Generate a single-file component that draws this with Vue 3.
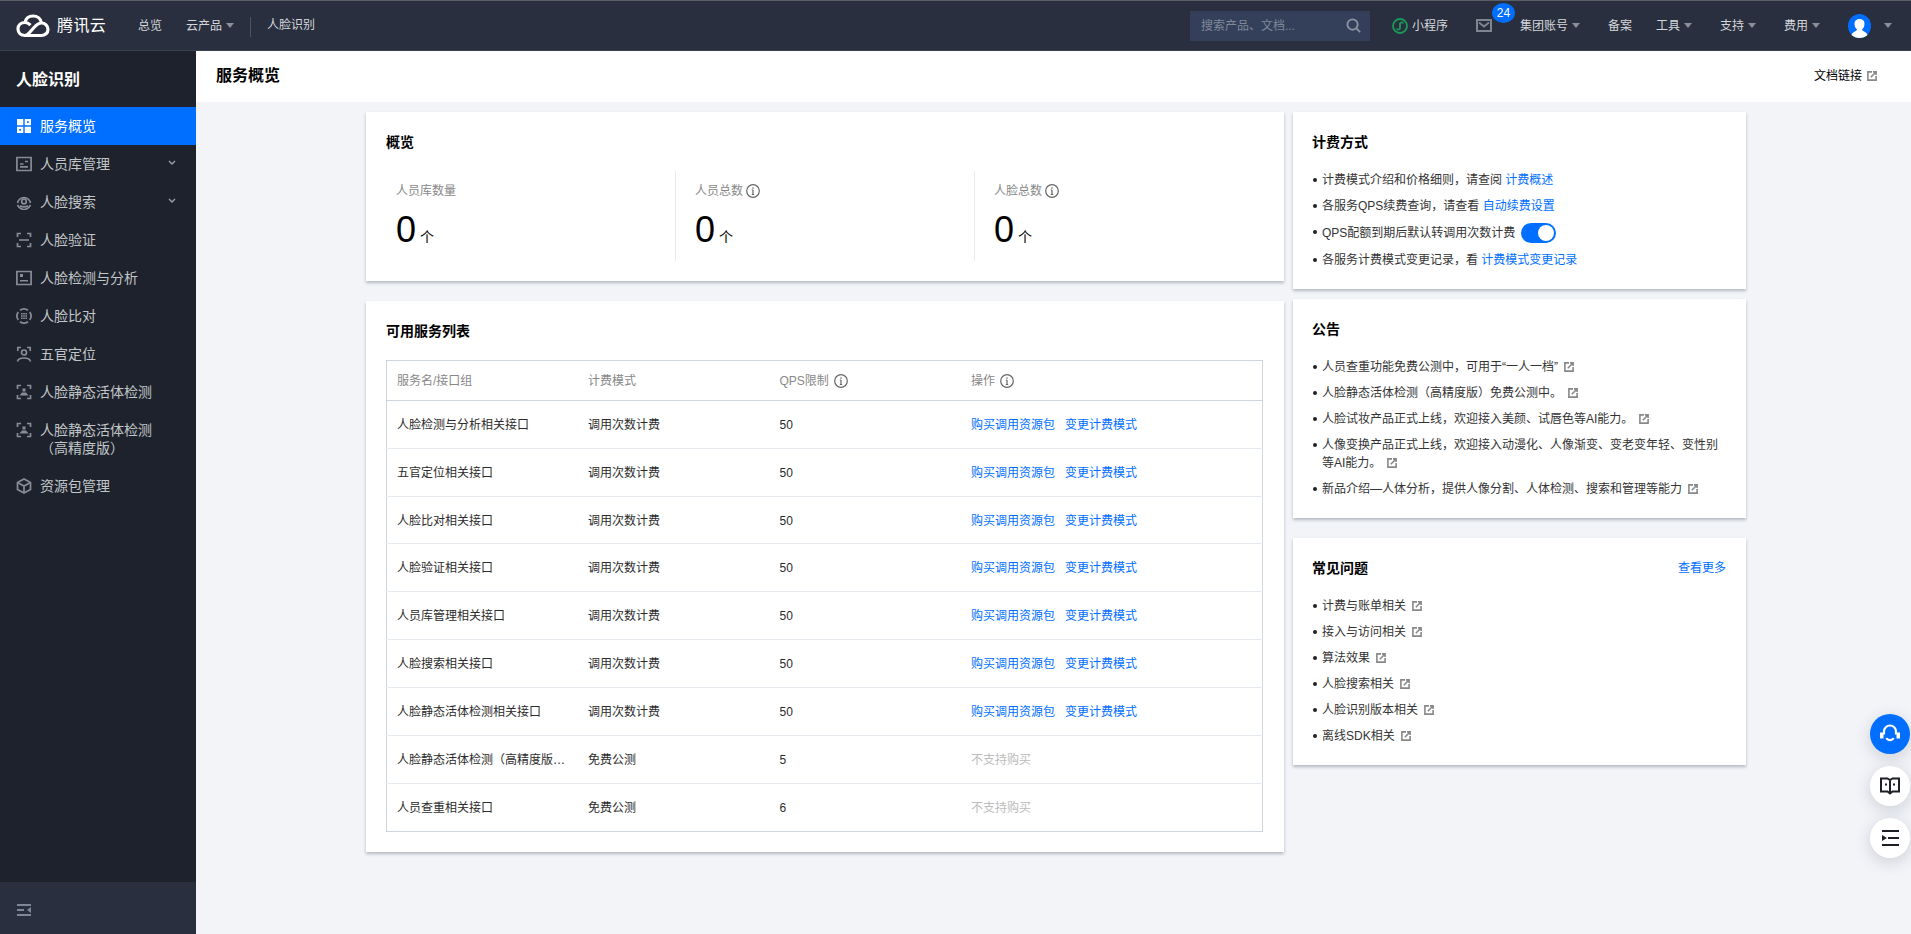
<template>
  <div class="page">
    <header class="topbar">
      <div class="logo">
        <svg width="34" height="24" viewBox="0 0 34 24" fill="none" stroke="#fff" stroke-width="3.2">
          <path d="M9 21.500c-3.800 0-7-2.500-7-6.500s3.200-6.500 7-6.500c.8-4 4-6.500 8-6.500 4.500 0 8 3 8.500 7" />
          <path d="M9 21.500h16.500c3.500 0 6.500-2.500 6.500-6s-3-6.500-6.500-6.500c-3 0-5 1.800-7.500 4.500l-4 4.500c-1.500 1.700-3 3.500-5 3.500" />
          <path d="M9 8.500c2.500 0 4 1.200 5.500 2.700" />
        </svg>
        <span>腾讯云</span>
      </div>
      <nav class="nav-left">
        <a class="nav-link">总览</a>
        <a class="nav-link">云产品<i class="caret"></i></a>
        <span class="nav-sep"></span>
        <a class="nav-link current">人脸识别</a>
      </nav>
      <div class="nav-right">
        <div class="search">
          <span>搜索产品、文档...</span>
          <svg width="15" height="15" viewBox="0 0 16 16" fill="none" stroke="#8a919f" stroke-width="2">
            <circle cx="7" cy="7" r="5.500" />
            <path d="M11 11l4 4" />
          </svg>
        </div>
        <a class="nav-link mini">
          <svg width="16" height="16" viewBox="0 0 16 16" fill="none" stroke="#1a9a58" stroke-width="1.800">
            <circle cx="8" cy="8" r="7" />
            <path d="M5 10.500c0 1.500 2.500 1.500 3 0V5.500c.5-1.500 3-1.500 3 0" />
          </svg>
          小程序
        </a>
        <a class="mail">
          <svg width="16" height="13" viewBox="0 0 16 13" fill="none" stroke="#7f8690" stroke-width="2">
            <rect x="1" y="1" width="14" height="11" />
            <path d="M3 3.500l5 4 5-4" />
          </svg>
          <b class="badge">24</b>
        </a>
        <a class="nav-link account">集团账号<i class="caret"></i></a>
        <a class="nav-link record">备案</a>
        <a v-for="label in ['工具', '支持', '费用']" :key="label" class="nav-link menu">{{ label }}<i class="caret"></i></a>
        <a class="avatar-wrap">
          <svg width="23" height="24" viewBox="0 0 23 24">
            <ellipse cx="11.500" cy="12" rx="11.500" ry="12" fill="#006eff" />
            <path d="M3.500 21c1-3.500 5-3.500 5.500-5.500-1.800-1.500-2.500-3.500-2.500-6C6.500 6.500 8.500 5 11.500 5s5 1.500 5 4.500c0 2.500-.7 4.500-2.500 6 .5 2 4.500 2 5.500 5.500-2 2-5 3-8 3s-6-1-8-3z" fill="#fff" />
          </svg>
          <i class="caret"></i>
        </a>
      </div>
    </header>

    <div class="body">
      <aside class="sidebar">
        <div class="side-title">人脸识别</div>
        <ul class="menu-list">
          <li v-for="item in menu" :key="item.label" class="menu-item" :class="{ active: item.active }">
            <svg class="menu-icon" width="16" height="16" viewBox="0 0 16 16" fill="none" stroke="currentColor" stroke-width="1.700">
              <path v-for="d in item.stroke" :key="d" :d="d" />
              <path v-for="d in item.fill" :key="d" :d="d" fill="currentColor" stroke="none" />
            </svg>
            <span class="menu-text">{{ item.label }}</span>
            <svg v-if="item.arrow" class="menu-arrow" width="8" height="6" viewBox="0 0 8 6" fill="none" stroke="#9aa0a8" stroke-width="1.400">
              <path d="M1 1l3 3 3-3" />
            </svg>
          </li>
        </ul>
        <div class="side-foot">
          <svg width="14" height="12" viewBox="0 0 14 12" fill="#7d8a96">
            <path d="M0 0h14v2H0zM0 5h7v2H0zM0 10h14v2H0zM14 3v6l-4-3z" />
          </svg>
        </div>
      </aside>

      <main class="main">
        <div class="page-head">
          <h1>服务概览</h1>
          <a class="doc-link">文档链接<svg class="ext" viewBox="0 0 10 10" fill="none" stroke="#888" stroke-width="1.600"><path :d="extPath" /></svg></a>
        </div>

        <div class="content">
          <div class="col-left">
            <section class="card">
              <h2>概览</h2>
              <div class="stats">
                <div v-for="s in stats" :key="s.label" class="stat">
                  <div class="stat-label">
                    {{ s.label }}
                    <svg v-if="s.tip" class="info" viewBox="0 0 14 14" fill="none" stroke="#666" stroke-width="1.200"><circle cx="7" cy="7" r="6.300" /><path d="M7 6v4.500M5.800 6H7M5.800 10.500h2.400M7 3.300v1.500" /></svg>
                  </div>
                  <div class="stat-value">0<span>个</span></div>
                </div>
              </div>
            </section>

            <section class="card">
              <h2>可用服务列表</h2>
              <table class="service-table">
                <colgroup>
                  <col class="c1" /><col class="c1" /><col class="c1" /><col />
                </colgroup>
                <thead>
                  <tr>
                    <th>服务名/接口组</th>
                    <th>计费模式</th>
                    <th>QPS限制<svg class="info" viewBox="0 0 14 14" fill="none" stroke="#666" stroke-width="1.200"><circle cx="7" cy="7" r="6.300" /><path d="M7 6v4.500M5.800 6H7M5.800 10.500h2.400M7 3.300v1.500" /></svg></th>
                    <th>操作<svg class="info" viewBox="0 0 14 14" fill="none" stroke="#666" stroke-width="1.200"><circle cx="7" cy="7" r="6.300" /><path d="M7 6v4.500M5.800 6H7M5.800 10.500h2.400M7 3.300v1.500" /></svg></th>
                  </tr>
                </thead>
                <tbody>
                  <tr v-for="row in services" :key="row.name">
                    <td class="ellipsis">{{ row.name }}</td>
                    <td>{{ row.mode }}</td>
                    <td>{{ row.qps }}</td>
                    <td v-if="row.buy">
                      <a class="link">购买调用资源包</a><a class="link second">变更计费模式</a>
                    </td>
                    <td v-else class="muted">不支持购买</td>
                  </tr>
                </tbody>
              </table>
            </section>
          </div>

          <div class="col-right">
            <section class="card">
              <h2>计费方式</h2>
              <ul class="bullets">
                <li>计费模式介绍和价格细则，请查阅 <a class="link">计费概述</a></li>
                <li>各服务QPS续费查询，请查看 <a class="link">自动续费设置</a></li>
                <li class="switch-row">QPS配额到期后默认转调用次数计费<span class="switch"></span></li>
                <li>各服务计费模式变更记录，看 <a class="link">计费模式变更记录</a></li>
              </ul>
            </section>

            <section class="card">
              <h2>公告</h2>
              <ul class="bullets">
                <li v-for="text in notices" :key="text">{{ text }}<svg class="ext" viewBox="0 0 10 10" fill="none" stroke="#888" stroke-width="1.600"><path :d="extPath" /></svg></li>
              </ul>
            </section>

            <section class="card faq">
              <div class="card-head">
                <h2>常见问题</h2>
                <a class="link">查看更多</a>
              </div>
              <ul class="bullets">
                <li v-for="text in faqs" :key="text">{{ text }}<svg class="ext" viewBox="0 0 10 10" fill="none" stroke="#888" stroke-width="1.600"><path :d="extPath" /></svg></li>
              </ul>
            </section>
          </div>
        </div>
      </main>
    </div>

    <div class="float-tools">
      <button class="tool blue">
        <svg width="22" height="22" viewBox="0 0 22 22" fill="none" stroke="#fff" stroke-width="2.200">
          <path d="M5 11.500V8.500a6 6 0 0112 0v3" />
          <path d="M7.500 15c1 2.800 6 2.800 7 0" />
          <path d="M1 9.500h3.500v6H1zM17.500 9.500H21v6h-3.500z" fill="#fff" stroke="none" />
        </svg>
      </button>
      <button class="tool">
        <svg width="20" height="18" viewBox="0 0 20 18" fill="none" stroke="#1c1f26" stroke-width="2">
          <path d="M1 1.500h6.500L10 3l2.500-1.500H19v13h-6.500L10 16.500 7.500 14.500H1zM10 3v13" />
          <path d="M5 6.500h2v2H5zM13 6.500h2v2h-2z" fill="#1c1f26" stroke="none" />
        </svg>
      </button>
      <button class="tool">
        <svg width="17" height="16" viewBox="0 0 17 16" fill="#1c1f26">
          <path d="M0 0h17v2H0zM6 7h11v2H6zM0 14h17v2H0zM0 5l5 3-5 3z" />
        </svg>
      </button>
    </div>
  </div>
</template>

<script setup>
const extPath = 'M5 .9H.9v8.200h8.200V5M3.800 6.200L9 1M6 .9h3.100V4'

const corners = 'M1.500 5V1.500H5M11 1.500h3.500V5M14.500 11v3.500H11M5 14.500H1.500V11'
const liveBody = 'M6.500 4.500h3v3h-3zM3.500 11.500L6 8.500h4l2.500 3z'

const menu = [
  {
    label: '服务概览',
    active: true,
    fill: ['M1 1h6.300v6.300H1zM8.700 15V8.700H15V15zM8.700 1H15v6.300H8.700zm2.300 2.300V5h1.700V3.300zM1 8.700h6.300V15H1zM3.300 11v1.700H5V11z']
  },
  {
    label: '人员库管理',
    arrow: true,
    stroke: ['M.9 1.500h14.200v13H.9z', 'M9 5.500h3M4 8h3.500M4 10.800h8']
  },
  {
    label: '人脸搜索',
    arrow: true,
    stroke: [
      'M1.500 9A6.600 6.600 0 0114.500 9',
      'M1.500 11c1.500 3 4 4.500 6.500 4.500s5-1.500 6.500-4.500',
      'M4 11.700c2 1.500 6 1.500 8 0',
      'M8 5.200a2.300 2.300 0 110 4.600 2.300 2.300 0 010-4.600z'
    ]
  },
  {
    label: '人脸验证',
    stroke: [corners],
    fill: ['M3 7.200h10v1.600H3z']
  },
  {
    label: '人脸检测与分析',
    stroke: ['M.9 1.500h14.200v13H.9z'],
    fill: ['M4 4h3v3H4zM4 10h8v1.600H4z']
  },
  {
    label: '人脸比对',
    stroke: ['M3.990 2.270A7 7 0 0112.010 2.270M13.730 3.990A7 7 0 0113.730 12.010M12.010 13.730A7 7 0 013.990 13.730M2.270 12.010A7 7 0 012.270 3.990'],
    fill: ['M5 5h1.600v1.600H5zM7.200 5h1.600v1.600H7.200zM9.400 5H11v1.600H9.400zM5 7.200h1.600v1.600H5zM7.200 7.200h1.600v1.600H7.200zM9.400 7.200H11v1.600H9.400zM5 9.400h1.600V11H5zM7.200 9.400h1.600V11H7.200zM9.400 9.400H11V11H9.400z']
  },
  {
    label: '五官定位',
    stroke: ['M1.800 5V1.500H5M11 1.500h3.200V5', 'M1.500 15.500c.5-2.500 3-3.500 6.500-3.500s6 1 6.500 3.500', 'M8 4a2.500 2.500 0 110 5 2.500 2.500 0 010-5z']
  },
  {
    label: '人脸静态活体检测',
    stroke: [corners],
    fill: [liveBody]
  },
  {
    label: '人脸静态活体检测（高精度版）',
    stroke: [corners],
    fill: [liveBody]
  },
  {
    label: '资源包管理',
    stroke: ['M8 1l6.500 3.500v7L8 15l-6.500-3.500v-7z', 'M1.500 4.500L8 8l6.500-3.500M8 8v7']
  }
]

const stats = [
  { label: '人员库数量', tip: false },
  { label: '人员总数', tip: true },
  { label: '人脸总数', tip: true }
]

const services = [
  { name: '人脸检测与分析相关接口', mode: '调用次数计费', qps: 50, buy: true },
  { name: '五官定位相关接口', mode: '调用次数计费', qps: 50, buy: true },
  { name: '人脸比对相关接口', mode: '调用次数计费', qps: 50, buy: true },
  { name: '人脸验证相关接口', mode: '调用次数计费', qps: 50, buy: true },
  { name: '人员库管理相关接口', mode: '调用次数计费', qps: 50, buy: true },
  { name: '人脸搜索相关接口', mode: '调用次数计费', qps: 50, buy: true },
  { name: '人脸静态活体检测相关接口', mode: '调用次数计费', qps: 50, buy: true },
  { name: '人脸静态活体检测（高精度版）相关接口', mode: '免费公测', qps: 5, buy: false },
  { name: '人员查重相关接口', mode: '免费公测', qps: 6, buy: false }
]

const notices = [
  '人员查重功能免费公测中，可用于“一人一档”',
  '人脸静态活体检测（高精度版）免费公测中。',
  '人脸试妆产品正式上线，欢迎接入美颜、试唇色等AI能力。',
  '人像变换产品正式上线，欢迎接入动漫化、人像渐变、变老变年轻、变性别等AI能力。',
  '新品介绍—人体分析，提供人像分割、人体检测、搜索和管理等能力'
]

const faqs = ['计费与账单相关', '接入与访问相关', '算法效果', '人脸搜索相关', '人脸识别版本相关', '离线SDK相关']
</script>

<style>
html,
body {
  margin: 0;
  height: 100%;
  overflow: hidden;
}
</style>

<style scoped>
.page {
  position: relative;
  display: flex;
  flex-direction: column;
  height: 934px;
  overflow: hidden;
  background: #f2f4f8;
  color: #000;
  font: 12px/18px "Liberation Sans", "Noto Sans CJK SC", sans-serif;
}

.topbar {
  display: flex;
  align-items: center;
  flex: none;
  height: 49px;
  padding-right: 19px;
  background: #292f3e;
  border-top: 1px solid #5a5d64;
  border-bottom: 1px solid #3a4252;
  color: #d5d7db;
}

.logo {
  display: flex;
  align-items: center;
  width: 138px;
  padding-left: 16px;
  box-sizing: border-box;
  color: #fff;
  font-size: 16px;
  letter-spacing: 0.4px;
}

.logo span {
  margin-left: 7px;
}

.nav-left,
.nav-right {
  display: flex;
  align-items: center;
}

.nav-right {
  margin-left: auto;
}

.nav-link {
  display: flex;
  align-items: center;
  white-space: nowrap;
}

.nav-link + .nav-link {
  margin-left: 24px;
}

.nav-link.current {
  margin-bottom: 2px;
}

.caret {
  display: inline-block;
  width: 0;
  height: 0;
  margin-left: 4px;
  border-top: 5px solid #8b8f98;
  border-left: 4px solid transparent;
  border-right: 4px solid transparent;
}

.nav-sep {
  width: 1px;
  height: 20px;
  margin: 3px 16px 0;
  background: #4d5564;
}

.search {
  display: flex;
  align-items: center;
  justify-content: space-between;
  width: 180px;
  height: 30px;
  padding: 0 9px 0 11px;
  box-sizing: border-box;
  background: #34405a;
  color: #7f8899;
}

.nav-link.mini {
  margin-left: 22px;
}

.mini svg {
  margin-right: 4px;
}

.mail {
  position: relative;
  display: flex;
  margin-left: 28px;
}

.badge {
  position: absolute;
  left: 16px;
  top: -16px;
  width: 23px;
  height: 20px;
  border-radius: 50%;
  background: #006eff;
  color: #fff;
  font-weight: normal;
  text-align: center;
  line-height: 20px;
}

.nav-link.account {
  margin-left: 28px;
}

.nav-link.record {
  margin-left: 28px;
}

.nav-link.menu {
  margin-left: 24px;
}

.nav-link.menu + .nav-link.menu {
  margin-left: 28px;
}

.avatar-wrap {
  display: flex;
  align-items: center;
  margin-left: 28px;
}

.avatar-wrap .caret {
  margin-left: 13px;
}

.body {
  display: flex;
  flex: 1;
  min-height: 0;
}

.sidebar {
  display: flex;
  flex-direction: column;
  flex: none;
  width: 196px;
  background: #1e222d;
  color: #c1c6c8;
}

.side-title {
  height: 56px;
  padding-left: 16px;
  color: #fff;
  font-size: 16px;
  font-weight: bold;
  line-height: 57px;
}

.menu-list {
  margin: 0;
  padding: 0;
  list-style: none;
}

.menu-item {
  position: relative;
  display: flex;
  align-items: flex-start;
  padding: 10px 36px 10px 40px;
  font-size: 14px;
  line-height: 18px;
}

.menu-item.active {
  background: #006eff;
  color: #fff;
}

.menu-icon {
  position: absolute;
  left: 16px;
  top: 11px;
  color: #868d95;
}

.active .menu-icon {
  color: #fff;
}

.menu-arrow {
  position: absolute;
  left: 168px;
  top: 15px;
}

.side-foot {
  display: flex;
  align-items: center;
  height: 48px;
  margin-top: auto;
  padding: 4px 0 0 17px;
  background: #292f3e;
}

.main {
  flex: 1;
  min-width: 0;
}

.page-head {
  display: flex;
  align-items: center;
  justify-content: space-between;
  box-sizing: border-box;
  height: 51px;
  padding: 0 34px 2px 20px;
  background: #fff;
}

.page-head h1 {
  margin: 0;
  font-size: 16px;
  font-weight: bold;
}

.doc-link {
  display: flex;
  align-items: center;
}

.ext {
  display: inline-block;
  width: 10px;
  height: 10px;
  margin-left: 5px;
  vertical-align: -1px;
}

.content {
  display: grid;
  grid-template-columns: 918px 453px;
  column-gap: 9px;
  margin: 10px 0 0 170px;
}

.col-left,
.col-right {
  display: flex;
  flex-direction: column;
  align-items: stretch;
}

.col-left {
  gap: 20px;
}

.col-right {
  gap: 10px;
}

.card {
  padding: 20px 20px 21px;
  background: #fff;
  box-shadow: 0 2px 3px 0 rgba(54, 58, 80, 0.32);
}

.col-right .card {
  padding: 20px 20px 20px 19px;
}

.col-right .faq {
  margin-top: 10px;
}

.card h2 {
  margin: 0;
  font-size: 14px;
  font-weight: bold;
  line-height: 20px;
}

.card-head {
  display: flex;
  align-items: center;
  justify-content: space-between;
}

.stats {
  display: grid;
  grid-template-columns: 289px 299px 299px;
  margin-top: 19px;
  margin-bottom: -1px;
}

.stat {
  height: 90px;
  padding: 11px 10px 0;
  box-sizing: border-box;
}

.stat + .stat {
  border-left: 1px solid #e7eaef;
  padding-left: 19px;
}

.stat-label {
  display: flex;
  align-items: center;
  color: #888;
}

.info {
  width: 14px;
  height: 14px;
  margin-left: 3px;
}

.stat-value {
  margin-top: 10px;
  font-size: 36px;
  line-height: 40px;
}

.stat-value span {
  margin-left: 4px;
  font-size: 14px;
}

.service-table {
  width: 877px;
  margin-top: 19px;
  margin-bottom: -1px;
  border: 1px solid #cfd5de;
  border-collapse: collapse;
  table-layout: fixed;
}

.c1 {
  width: 191.500px;
}

.service-table th,
.service-table td {
  height: 46px;
  padding: 1px 10px 0;
  border-bottom: 1px solid #e7eaef;
  color: #2b2b2b;
  text-align: left;
  font-weight: normal;
}

.service-table thead th {
  height: 39px;
  padding-top: 0;
  border-bottom-color: #cfd5de;
  color: #888;
}

.service-table tbody tr:nth-child(3) td {
  height: 45px;
}

.service-table tbody tr:last-child td {
  border-bottom-color: #cfd5de;
}

.service-table th .info {
  margin-left: 5px;
  vertical-align: -3px;
}

.ellipsis {
  overflow: hidden;
  text-overflow: ellipsis;
  white-space: nowrap;
}

.link {
  color: #006eff;
}

.second {
  margin-left: 10px;
}

.service-table td.muted {
  height: 47px;
  padding-top: 0;
  color: #bbb;
}

.bullets {
  margin: 19px 0 0;
  padding: 0 0 0 10px;
  list-style: none;
}

.bullets li {
  position: relative;
  margin-bottom: 8px;
  color: #333;
}

.bullets li:last-child {
  margin-bottom: 0;
}

.bullets li::before {
  content: "";
  position: absolute;
  left: -9px;
  top: 7px;
  width: 4px;
  height: 4px;
  border-radius: 50%;
  background: #222;
}

.bullets .ext {
  margin-left: 6px;
}

.switch-row {
  display: flex;
  align-items: center;
  height: 20px;
}

.switch {
  position: relative;
  width: 35px;
  height: 20px;
  margin-left: 6px;
  border-radius: 10px;
  background: #006eff;
}

.switch::after {
  content: "";
  position: absolute;
  right: 2px;
  top: 2px;
  width: 16px;
  height: 16px;
  border-radius: 50%;
  background: #fff;
}

.float-tools {
  position: absolute;
  right: 1px;
  top: 714px;
  display: flex;
  flex-direction: column;
  gap: 12px;
}

.tool {
  display: flex;
  align-items: center;
  justify-content: center;
  width: 40px;
  height: 40px;
  padding: 0;
  border: 0;
  border-radius: 50%;
  background: #fff;
  box-shadow: 0 4px 16px rgba(54, 58, 80, 0.2);
}

.tool.blue {
  background: #006eff;
}
</style>
